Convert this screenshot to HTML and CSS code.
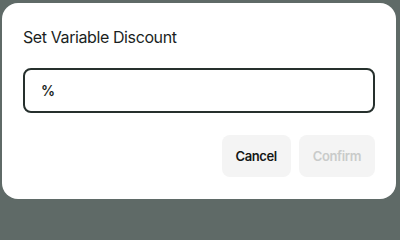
FILE: index.html
```html
<!DOCTYPE html>
<html>
<head>
<meta charset="utf-8">
<link rel="stylesheet" href="styles.css">
</head>
<body>
<div class="dialog">
  <h2 class="title">Set Variable Discount</h2>
  <div class="field"><span class="unit">%</span></div>
  <div class="actions">
    <button class="btn btn-cancel">Cancel</button>
    <button class="btn btn-confirm" disabled>Confirm</button>
  </div>
</div>
</body>
</html>
```
FILE: styles.css
```css
html, body {
  margin: 0;
  padding: 0;
}
body {
  background: #5f6a67;
  width: 400px;
  height: 203px;
  overflow: hidden;
  font-family: Inter, "Noto Sans", sans-serif;
}
.dialog {
  margin: 3px 0 0 2px;
  width: 394px;
  height: 196px;
  box-sizing: border-box;
  background: #ffffff;
  border-radius: 16px;
  padding: 21px 21px 22px 21px;
  display: flex;
  flex-direction: column;
}
.title {
  margin: 0;
  padding-top: 1px;
  font-size: 16px;
  line-height: 24px;
  font-weight: 400;
  letter-spacing: -0.4px;
  color: #1b1f1e;
}
.field {
  margin-top: 19px;
  height: 45px;
  box-sizing: border-box;
  border: 2px solid #26302d;
  border-radius: 8px;
  display: flex;
  align-items: center;
  padding-left: 16px;
}
.unit {
  font-size: 14px;
  font-weight: 600;
  color: #1b1f1e;
}
.actions {
  margin-top: 22px;
  display: flex;
  justify-content: flex-end;
  gap: 8px;
}
.btn {
  height: 42px;
  border: none;
  border-radius: 8px;
  background: #f4f4f4;
  font-family: Inter, "Noto Sans", sans-serif;
  font-size: 13px;
  font-weight: 600;
  letter-spacing: -0.4px;
  padding: 0 14px;
}
.btn-cancel {
  color: #141716;
}
.btn-confirm {
  color: #c9cbca;
}
```
